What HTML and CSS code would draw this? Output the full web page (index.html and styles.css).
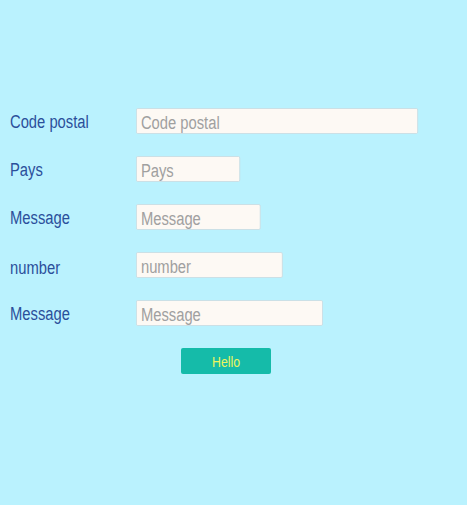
FILE: index.html
```html
<!DOCTYPE html>
<html lang="fr">
<head>
<meta charset="utf-8">
<link rel="stylesheet" href="styles.css">
</head>
<body>
<form class="form">
  <div class="row"><label class="label"><span class="narrow">Code postal</span></label><input class="field w-cp" placeholder="Code postal"></div>
  <div class="row"><label class="label"><span class="narrow">Pays</span></label><input class="field w-pays" placeholder="Pays"></div>
  <div class="row"><label class="label"><span class="narrow">Message</span></label><input class="field w-msg1" placeholder="Message"></div>
  <div class="row"><label class="label label-low"><span class="narrow">number</span></label><input class="field w-num" placeholder="number"></div>
  <div class="row"><label class="label"><span class="narrow">Message</span></label><input class="field w-msg2" placeholder="Message"></div>
  <div class="actions"><button type="button" class="btn"><span class="narrow">Hello</span></button></div>
</form>
</body>
</html>
```
FILE: styles.css
```css
html, body {
  margin: 0;
  padding: 0;
  background: #baf2fe;
  font-family: "Liberation Sans", Arial, sans-serif;
}
.form {
  padding: 108px 0 0 10px;
  display: flex;
  flex-direction: column;
  gap: 22px;
}
.row {
  display: flex;
  align-items: center;
  height: 26px;
}
.narrow {
  display: inline-block;
  transform: scaleX(0.82);
  transform-origin: left center;
}
.label {
  width: 126px;
  flex: none;
  color: #2b4f9b;
  font-size: 18px;
  padding-top: 2px;
}
.label-low {
  padding-top: 6px;
}
.field {
  box-sizing: border-box;
  flex: none;
  height: 26px;
  margin: 0;
  padding: 4px 5px 0;
  border: 1px solid #c9dde3;
  border-radius: 2px;
  background: #fdf9f4;
  font-family: inherit;
  font-size: 18px;
  color: #555;
  transform: scaleX(0.82);
  transform-origin: left center;
}
.field::placeholder { color: #a0a0a0; }
.w-cp { width: 344px; }
.w-pays { width: 127px; }
.w-msg1 { width: 152px; }
.w-num { width: 179px; }
.w-msg2 { width: 228px; }
.actions {
  padding-left: 171px;
}
.btn {
  width: 90px;
  height: 26px;
  border: none;
  border-radius: 2px;
  background: #15bba9;
  color: #eef55c;
  font-family: inherit;
  font-size: 15px;
  padding: 1px 0 0;
  display: flex;
  align-items: center;
  justify-content: center;
}
.btn .narrow {
  transform-origin: center;
}
```
